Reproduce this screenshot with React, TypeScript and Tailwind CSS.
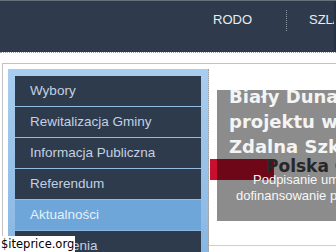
import React from "react";

const items = [
  { label: "Wybory", active: false },
  { label: "Rewitalizacja Gminy", active: false },
  { label: "Informacja Publiczna", active: false },
  { label: "Referendum", active: false },
  { label: "Aktualności", active: true },
  { label: "Ogłoszenia", active: false },
];

export default function App() {
  return (
    <div className="w-[336px] h-[252px] overflow-hidden relative bg-white font-['Liberation_Sans',Arial,sans-serif]">
      {/* header */}
      <div className="h-[52px] bg-[#2f3b4c] border-t border-[#68707b] flex items-start relative">
        <div className="flex items-start pl-[213px] whitespace-nowrap">
          <span className="mt-[11px] text-[13px] leading-[16px] text-[#e8edf2]">RODO</span>
          <span className="ml-[34px] mt-[9px] h-[21px] border-l border-dotted border-[#8e98a4]" />
          <span className="ml-[22px] mt-[11px] text-[13px] leading-[16px] text-[#e8edf2]">SZLAKI TURYSTYCZNE</span>
        </div>
        <div className="absolute right-0 top-0 h-full w-[2px] bg-[#273241]" />
      </div>
      <div className="h-0 border-t border-dotted border-[#9ba1a8]" />

      {/* content */}
      <div className="ml-[2px] mt-[10px] border-l border-t border-[#c2c2c2] flex h-[200px]">
        <div className="pl-[5px] pt-[5px]">
          <div className="w-[201px] bg-gradient-to-b from-[#a9cdee] to-[#86b5e2] pl-[7px] pr-[7px] pt-[7px] border-r border-dotted border-[#a0a0a0] h-[200px]">
            <div className="flex flex-col">
              {items.map((it) => (
                <div
                  key={it.label}
                  className={
                    it.active
                      ? "h-[31px] flex items-center pl-[15px] text-[13.5px] bg-[#6ea6da] text-[#e4f0fb] border-b border-[#8ab6e0]"
                      : "h-[31px] flex items-center pl-[15px] text-[13.5px] bg-[#2d3b4d] text-[#c3d1e1] border-b border-[#94bde4]"
                  }
                >
                  {it.label}
                </div>
              ))}
            </div>
          </div>
        </div>

        <div className="flex-1 relative">
          {/* image behind caption */}
          <div className="absolute left-[1px] top-[95px] w-[64px] h-[21px] bg-[#c8102e]" />
          <div className="absolute left-[57px] top-[94px] text-[17px] leading-[17px] font-bold text-[#474747] font-['DejaVu_Sans',sans-serif] whitespace-nowrap">
            Polska Cyfrowa
          </div>

          <div className="relative ml-[8px] mt-[26px] h-[131px] bg-black/45 overflow-hidden">
            <div className="mt-[-6px] pl-[12px] font-['DejaVu_Sans',sans-serif] font-bold text-[18px] leading-[25px] text-[#f4f4f4] whitespace-nowrap">
              <div>Biały Dunajec w</div>
              <div>projektu w ramach</div>
              <div>Zdalna Szkoła+</div>
            </div>
            <div className="mt-[13px] text-[13px] leading-[16px] text-[#f7f7f7] whitespace-nowrap">
              <div className="pl-[36px]">Podpisanie umowy o</div>
              <div className="pl-[19px]">dofinansowanie projektu</div>
            </div>
          </div>
          <div className="mt-[24px] border-t border-[#cfcfcf]" />
        </div>
      </div>

      {/* watermark */}
      <div className="absolute left-0 bottom-0 bg-white px-[1px] h-[16px] flex items-center text-[11.5px] leading-[14px] text-black font-['DejaVu_Sans',sans-serif]">
        $iteprice.org
      </div>
    </div>
  );
}
